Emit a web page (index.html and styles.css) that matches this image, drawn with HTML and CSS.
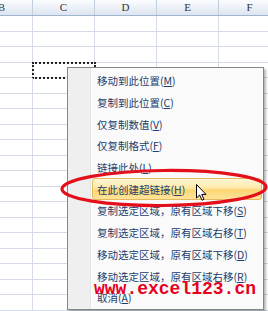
FILE: index.html
```html
<!DOCTYPE html>
<html>
<head>
<meta charset="utf-8">
<link rel="stylesheet" href="styles.css">
</head>
<body>
<div class="viewport">
  <div class="sheet">
    <div class="colhead">
      <div class="hc">B</div><div class="hc">C</div><div class="hc">D</div><div class="hc">E</div><div class="hc">F</div>
    </div>
    <div class="grid" id="grid"></div>
  </div>
</div>

<div class="menu">
  <div class="item">移动到此位置(<u>M</u>)</div>
  <div class="item">复制到此位置(<u>C</u>)</div>
  <div class="item">仅复制数值(<u>V</u>)</div>
  <div class="item">仅复制格式(<u>F</u>)</div>
  <div class="item">链接此处(<u>L</u>)</div>
  <div class="item hot">在此创建超链接(<u>H</u>)</div>
  <div class="item">复制选定区域，原有区域下移(<u>S</u>)</div>
  <div class="item">复制选定区域，原有区域右移(<u>T</u>)</div>
  <div class="item">移动选定区域，原有区域下移(<u>D</u>)</div>
  <div class="item">移动选定区域，原有区域右移(<u>R</u>)</div>
  <div class="item">取消(<u>A</u>)</div>
</div>

<div class="watermark">www.excel123.cn</div>

<svg class="ring" width="268" height="311" viewBox="0 0 268 311">
  <ellipse cx="164" cy="188" rx="102" ry="17.5" fill="none" stroke="#e3101c" stroke-width="3.2" transform="rotate(-0.6 164 188)"/>
</svg>

<svg class="cursor" width="12" height="17" viewBox="0 0 12 17">
  <path d="M0.5 0.5 L0.5 14 L3.6 11 L6 16.2 L8 15.3 L5.7 10.4 L10 10.4 Z" fill="#fff" stroke="#000" stroke-width="1" stroke-linejoin="miter"/>
</svg>

<script>
  var g = document.getElementById('grid');
  var html = '';
  for (var r = 0; r < 19; r++) {
    for (var c = 0; c < 5; c++) {
      html += '<div class="cell' + (r === 3 && c === 1 ? ' marquee' : '') + '"></div>';
    }
  }
  g.innerHTML = html;
</script>
</body>
</html>
```

FILE: styles.css
```css
html, body {
  margin: 0;
  padding: 0;
}
body {
  width: 268px;
  height: 311px;
  overflow: hidden;
  position: relative;
  background: #fff;
  font-family: "Noto Sans CJK SC", "Noto Sans", sans-serif;
}
.viewport {
  width: 268px;
  height: 311px;
  overflow: hidden;
}
.sheet {
  margin-left: -29px;
  width: 310px;
}
.colhead {
  display: flex;
  height: 16px;
  background: linear-gradient(#fbfcfe, #e9eef6 60%, #dde5f0);
  border-bottom: 1px solid #9eb6ce;
  box-sizing: border-box;
}
.hc {
  width: 62px;
  flex: none;
  box-sizing: border-box;
  border-right: 1px solid #c3cfdd;
  text-align: center;
  font-family: "Liberation Serif", serif;
  font-size: 11px;
  line-height: 15px;
  color: #333;
}
.grid {
  display: grid;
  grid-template-columns: repeat(5, 62px);
  grid-auto-rows: 15.5px;
}
.cell {
  box-sizing: border-box;
  border-right: 1px solid #d4dbe7;
  border-bottom: 1px solid #d4dbe7;
}
.marquee {
  outline: 2px dotted #222;
  outline-offset: -1px;
}
.menu {
  position: absolute;
  left: 67px;
  top: 67px;
  width: 197px;
  height: 243px;
  box-sizing: border-box;
  border: 1px solid #868686;
  padding-top: 2px;
  background: linear-gradient(to right, #efefef 0 22px, #e2e3e3 22px 23px, #ffffff 23px 24px, #fafafa 24px);
  box-shadow: 2px 2px 2px rgba(0, 0, 0, 0.28);
}
.item {
  height: 21.7px;
  display: flex;
  align-items: center;
  padding-left: 29px;
  font-size: 10.5px;
  color: #223c6c;
  white-space: nowrap;
}
.item u {
  text-decoration: underline;
  text-underline-offset: 1px;
}
.item.hot {
  margin-left: 24px;
  margin-right: 1px;
  padding-left: 4px;
  box-sizing: border-box;
  border: 1px solid #e4b95e;
  border-radius: 3px;
  background: linear-gradient(#fff6d6, #ffe9a8 45%, #fdd672 55%, #fde39b);
}
.watermark {
  position: absolute;
  left: 94px;
  top: 280px;
  font-family: "Liberation Mono", monospace;
  font-weight: bold;
  font-size: 18px;
  line-height: 18px;
  color: #e8001c;
  white-space: nowrap;
}
.ring {
  position: absolute;
  left: 0;
  top: 0;
}
.cursor {
  position: absolute;
  left: 196px;
  top: 184px;
}
```
